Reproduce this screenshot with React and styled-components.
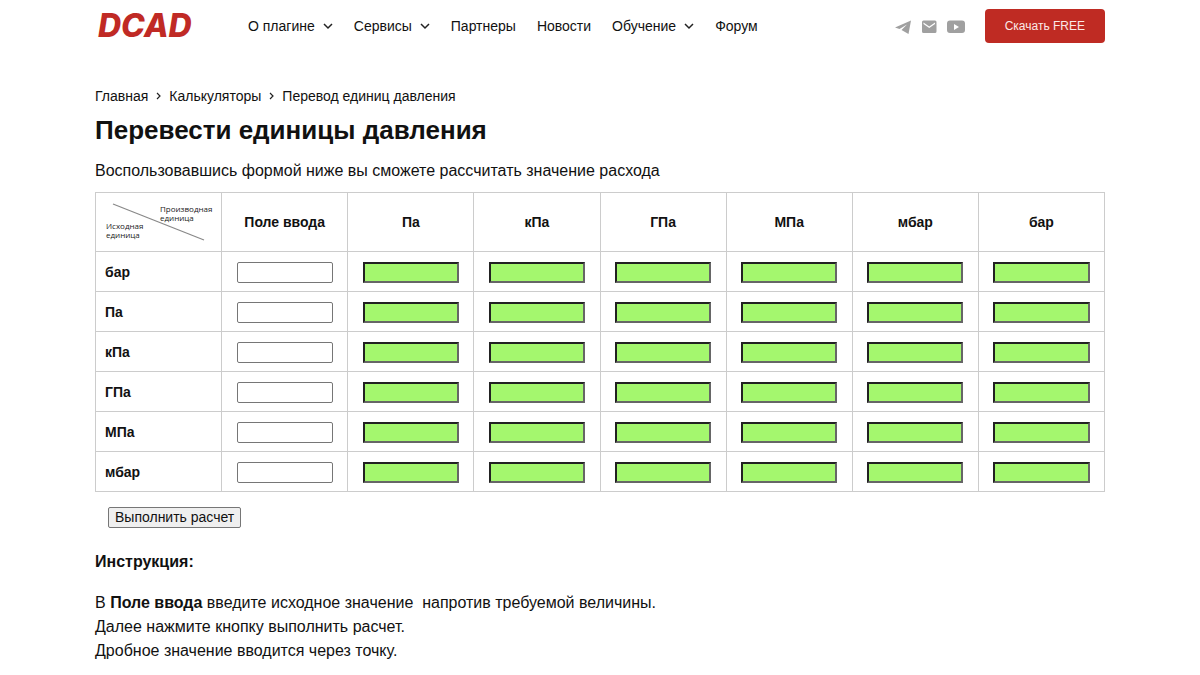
import React, { useState } from 'react';
import styled, { createGlobalStyle } from 'styled-components';

const GlobalStyle = createGlobalStyle`
  * {
    box-sizing: border-box;
  }
  body {
    margin: 0;
    background: #fff;
    color: #111;
    font-family: "Liberation Sans", Arial, sans-serif;
    font-size: 16px;
    line-height: 24px;
  }
`;

const Container = styled.div`
  max-width: 1058px;
  margin: 0 auto;
  padding: 0 24px;
`;

const HeaderRow = styled(Container).attrs({ as: 'header' })`
  display: flex;
  align-items: center;
  height: 52px;
`;

const Logo = styled.a`
  min-width: 104px;
  padding-left: 3px;
  color: #c02a25;
  font-family: Inter, sans-serif;
  font-size: 32px;
  font-style: italic;
  font-weight: 800;
  line-height: 52px;
  text-decoration: none;
`;

const Nav = styled.nav`
  display: flex;
  gap: 21px;
  margin-left: 49px;
`;

const NavLink = styled.a`
  display: flex;
  align-items: center;
  gap: 8px;
  color: #111;
  font-size: 14px;
  text-decoration: none;
`;

const Socials = styled.div`
  display: flex;
  align-items: center;
  gap: 8px;
  margin-left: auto;
  padding-top: 1px;
  a {
    display: flex;
  }
`;

const DownloadLink = styled.a`
  margin-left: 20px;
  padding: 0 20px;
  border-radius: 4px;
  background: #bf2b23;
  color: #fbe9e7;
  font-size: 12px;
  line-height: 34px;
  text-decoration: none;
`;

const Breadcrumbs = styled.nav`
  display: flex;
  align-items: center;
  gap: 8px;
  margin-top: 32px;
  font-size: 14px;
  a {
    color: #111;
    text-decoration: none;
  }
`;

const Title = styled.h1`
  margin: 4px 0 0;
  font-size: 26px;
  line-height: 36px;
`;

const Intro = styled.p`
  margin: 11px 0 9px;
`;

const UnitTable = styled.table`
  width: 100%;
  border-collapse: collapse;
  table-layout: fixed;
  font-size: 14px;
  th, td {
    height: 40px;
    padding: 0;
    border: 1px solid #ccc;
    text-align: center;
  }
  thead th {
    height: 59px;
  }
  tbody th {
    padding-left: 9px;
    text-align: left;
  }
`;

const Legend = styled.svg`
  display: block;
  width: 110px;
  height: 40px;
  margin: 0 auto;
  font-family: "Open Sans", sans-serif;
  font-size: 8px;
  font-weight: 400;
`;

const Field = styled.input`
  display: block;
  width: 77%;
  height: 21px;
  margin: 2px auto 0;
  padding: 1px 4px;
  border: 1px solid #767676;
  border-radius: 2px;
  background: #fff;
  font: inherit;
`;

const ResultField = styled(Field)`
  border: 2px solid;
  border-color: #222 #666 #666 #222;
  border-radius: 0;
  background: #a4f76e;
`;

const CalcButton = styled.button`
  display: block;
  height: 21px;
  margin: 15px 0 0 13px;
  padding: 0 6px;
  border: 1px solid #767676;
  border-radius: 2px;
  background: #efefef;
  color: #111;
  font: inherit;
  font-size: 14px;
  line-height: 19px;
`;

const Instructions = styled.section`
  margin-top: 22px;
  p {
    margin: 0 0 17px;
  }
`;

const units = [
  { name: 'Па', factor: 1 },
  { name: 'кПа', factor: 1e3 },
  { name: 'ГПа', factor: 1e9 },
  { name: 'МПа', factor: 1e6 },
  { name: 'мбар', factor: 100 },
  { name: 'бар', factor: 1e5 },
];

const rows = [units[5], ...units.slice(0, 5)];

const menu = [
  { title: 'О плагине', sub: true },
  { title: 'Сервисы', sub: true },
  { title: 'Партнеры' },
  { title: 'Новости' },
  { title: 'Обучение', sub: true },
  { title: 'Форум' },
];

const Chevron = () => (
  <svg width="10" height="10" viewBox="0 0 10 10" fill="none" stroke="#222" strokeWidth="1.5">
    <path d="M1 3l4 4 4-4" />
  </svg>
);

const Separator = () => (
  <svg width="5" height="8" viewBox="0 0 5 8" fill="none" stroke="#222" strokeWidth="1.2">
    <path d="M1 1l3 3-3 3" />
  </svg>
);

const TelegramIcon = () => (
  <svg width="18" height="16" viewBox="0 0 18 16" fill="#a0a0a0">
    <path d="M16 1.500L0 8.500l4.500 1.500L12 5.500l-5.500 5.500 7 4z" />
  </svg>
);

const MailIcon = () => (
  <svg width="18" height="16" viewBox="0 0 18 16" fill="#a0a0a0">
    <path d="M2.500 1.500h11.500a1.500 1.500 0 0 1 1.500 1.500v9.500a1.500 1.500 0 0 1-1.500 1.500H2.500A1.500 1.500 0 0 1 1 12.500V3A1.500 1.500 0 0 1 2.500 1.500zM2.500 3.500v1.500l5.750 4L14 5V3.500L8.250 7.500z" fillRule="evenodd" />
  </svg>
);

const YoutubeIcon = () => (
  <svg width="18" height="16" viewBox="0 0 18 16" fill="#a0a0a0">
    <path d="M3 1.500h12a3 3 0 0 1 3 3v6.500a3 3 0 0 1-3 3H3a3 3 0 0 1-3-3v-6.500a3 3 0 0 1 3-3zM7 5v6l5-3z" fillRule="evenodd" />
  </svg>
);

const CornerLegend = () => (
  <Legend viewBox="0 0 110 40" fill="#222">
    <path d="M9 2L100 38" stroke="#888" strokeWidth="1.2" />
    <text x="56" y="10">Производная</text>
    <text x="56" y="19">единица</text>
    <text x="2" y="27">Исходная</text>
    <text x="2" y="36">единица</text>
  </Legend>
);

const App = () => {
  const [values, setValues] = useState({});
  const [results, setResults] = useState({});

  const calculate = () => {
    const next = {};
    rows.forEach((row) => {
      const value = parseFloat(values[row.name]);
      if (!Number.isNaN(value)) {
        next[row.name] = value * row.factor;
      }
    });
    setResults(next);
  };

  return (
    <>
      <GlobalStyle />
      <HeaderRow>
        <Logo href="#">DCAD</Logo>
        <Nav>
          {menu.map(({ title, sub }) => (
            <NavLink href="#" key={title}>
              {title}
              {sub && <Chevron />}
            </NavLink>
          ))}
        </Nav>
        <Socials>
          <a href="#" aria-label="Telegram"><TelegramIcon /></a>
          <a href="#" aria-label="Email"><MailIcon /></a>
          <a href="#" aria-label="YouTube"><YoutubeIcon /></a>
        </Socials>
        <DownloadLink href="#">Скачать FREE</DownloadLink>
      </HeaderRow>
      <Container as="main">
        <Breadcrumbs>
          <a href="#">Главная</a>
          <Separator />
          <a href="#">Калькуляторы</a>
          <Separator />
          <span>Перевод единиц давления</span>
        </Breadcrumbs>
        <Title>Перевести единицы давления</Title>
        <Intro>Воспользовавшись формой ниже вы сможете рассчитать значение расхода</Intro>
        <UnitTable>
          <thead>
            <tr>
              <th><CornerLegend /></th>
              <th>Поле ввода</th>
              {units.map((unit) => <th key={unit.name}>{unit.name}</th>)}
            </tr>
          </thead>
          <tbody>
            {rows.map((row) => (
              <tr key={row.name}>
                <th>{row.name}</th>
                <td>
                  <Field
                    aria-label={row.name}
                    value={values[row.name] || ''}
                    onChange={(e) => setValues({ ...values, [row.name]: e.target.value })}
                  />
                </td>
                {units.map((unit) => (
                  <td key={unit.name}>
                    <ResultField
                      readOnly
                      aria-label={`${row.name} - ${unit.name}`}
                      value={row.name in results ? results[row.name] / unit.factor : ''}
                    />
                  </td>
                ))}
              </tr>
            ))}
          </tbody>
        </UnitTable>
        <CalcButton type="button" onClick={calculate}>Выполнить расчет</CalcButton>
        <Instructions>
          <p><strong>Инструкция:</strong></p>
          <p>
            В <strong>Поле ввода</strong> введите исходное значение &nbsp;напротив требуемой величины.<br />
            Далее нажмите кнопку выполнить расчет.<br />
            Дробное значение вводится через точку.
          </p>
        </Instructions>
      </Container>
    </>
  );
};

export default App;
